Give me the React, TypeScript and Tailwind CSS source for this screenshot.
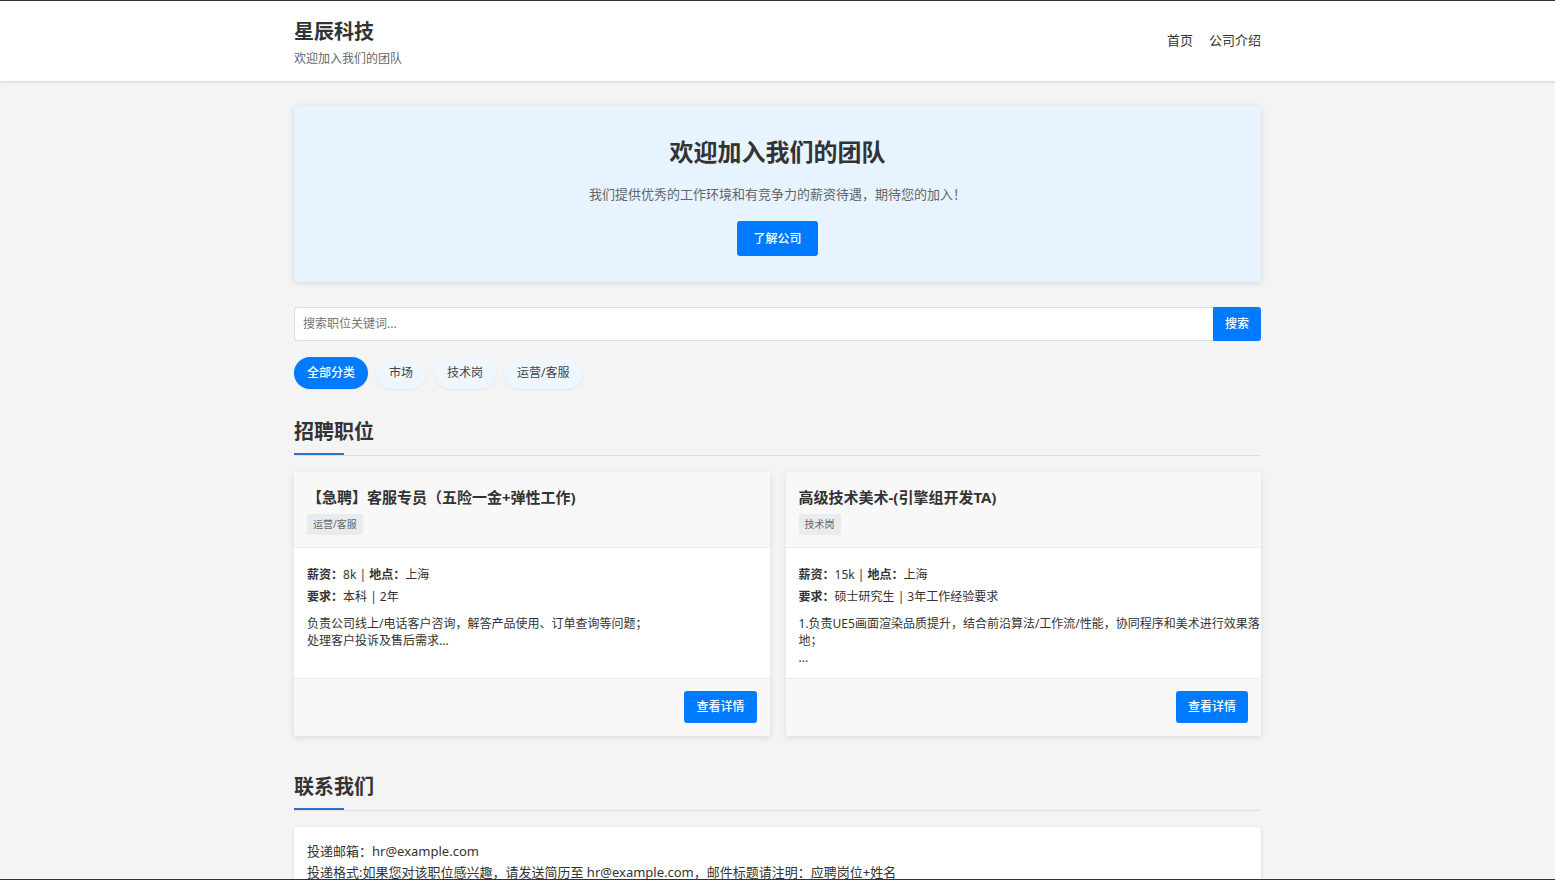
import { useState } from 'react';

interface Job {
  id: number;
  title: string;
  category: string;
  salary: string;
  location: string;
  requirement: string;
  description: string;
}

const categories = ['全部分类', '市场', '技术岗', '运营/客服'];

const jobs: Job[] = [
  {
    id: 1,
    title: '【急聘】客服专员（五险一金+弹性工作)',
    category: '运营/客服',
    salary: '8k',
    location: '上海',
    requirement: '本科 | 2年',
    description: '负责公司线上/电话客户咨询，解答产品使用、订单查询等问题；\n处理客户投诉及售后需求...',
  },
  {
    id: 2,
    title: '高级技术美术-(引擎组开发TA)',
    category: '技术岗',
    salary: '15k',
    location: '上海',
    requirement: '硕士研究生 | 3年工作经验要求',
    description: '1.负责UE5画面渲染品质提升，结合前沿算法/工作流/性能，协同程序和美术进行效果落地；\n...',
  },
];

function SectionTitle({ children }: { children: string }) {
  return (
    <h2 className="relative border-b border-[#e0e0e0] pb-[9px] text-xl leading-7 font-bold">
      {children}
      <span className="absolute bottom-0 left-0 h-0.5 w-[50px] bg-[#1f74d1]" />
    </h2>
  );
}

function JobCard({ job }: { job: Job }) {
  return (
    <article className="flex flex-col overflow-hidden rounded-[3px] bg-white shadow-[0_2px_6px_rgba(0,0,0,0.1)]">
      <div className="border-b border-[#ececec] bg-[#f8f8f9] px-[13px] pt-[13px] pb-3">
        <h3 className="text-[15px] leading-6 font-bold">{job.title}</h3>
        <span className="mt-[5px] block w-fit rounded-xs bg-[#e9ecef] px-1.5 text-[10px] leading-[21px] text-[#666]">
          {job.category}
        </span>
      </div>

      <div className="flex-1 px-[13px] pt-4 pb-3 text-xs">
        <p className="leading-[22px]">
          <strong>薪资：</strong>
          {job.salary} | <strong>地点：</strong>
          {job.location}
        </p>
        <p className="leading-[22px]">
          <strong>要求：</strong>
          {job.requirement}
        </p>
        <p className="-mr-3 mt-[7px] leading-[17px] whitespace-pre-line">{job.description}</p>
      </div>

      <div className="flex justify-end border-t border-[#ececec] bg-[#f8f8f9] px-[13px] pt-3 pb-[13px]">
        <a href="#job" className="rounded-[3px] bg-[#007bff] px-3 text-xs leading-8 font-medium text-white">
          查看详情
        </a>
      </div>
    </article>
  );
}

export default function App() {
  const [active, setActive] = useState('全部分类');

  return (
    <div
      lang="zh-CN"
      className="flex h-screen flex-col border-y border-[#333] bg-[#f4f4f4] font-['Noto_Sans','Noto_Sans_CJK_SC',sans-serif] text-[#333]"
    >
      <header className="relative z-10 bg-white shadow-[0_1px_3px_rgba(0,0,0,0.15)]">
        <div className="mx-auto flex max-w-[999px] justify-between px-4 pt-[17px] pb-3">
          <div>
            <h1 className="text-xl leading-7 font-bold">星辰科技</h1>
            <p className="mt-[3px] text-xs leading-5 text-[#666]">欢迎加入我们的团队</p>
          </div>
          <nav className="flex gap-4 pt-2.5 text-[13px] leading-6">
            <a href="#home">首页</a>
            <a href="#about">公司介绍</a>
          </nav>
        </div>
      </header>

      <main className="min-h-0 flex-1 overflow-y-auto [scrollbar-width:none]">
        <div className="mx-auto max-w-[999px] px-4 pt-[25px] pb-8">
          <section className="flex flex-col items-center rounded-[3px] bg-[#e7f3ff] px-4 pt-7 pb-[26px] text-center shadow-[0_1px_6px_rgba(0,0,0,0.12)]">
            <h2 className="text-2xl leading-9 font-bold">欢迎加入我们的团队</h2>
            <p className="mt-3 text-[13px] leading-6 text-[#666]">
              我们提供优秀的工作环境和有竞争力的薪资待遇，期待您的加入！
            </p>
            <a
              href="#about"
              className="mt-[15px] rounded-[3px] bg-[#007bff] px-4 text-xs leading-[35px] font-medium text-white"
            >
              了解公司
            </a>
          </section>

          {/* 搜索 */}
          <form className="mt-[25px] flex h-[34px]" onSubmit={(e) => e.preventDefault()}>
            <input
              type="text"
              aria-label="搜索职位关键词"
              placeholder="搜索职位关键词..."
              className="min-w-0 flex-1 rounded-l-[3px] border border-r-0 border-[#ddd] bg-white px-2 text-xs outline-none placeholder:text-[#757575]"
            />
            <button type="submit" className="rounded-r-[3px] bg-[#007bff] px-3 text-xs font-medium text-white">
              搜索
            </button>
          </form>

          {/* 分类 */}
          <div className="mt-4 flex flex-wrap gap-2">
            {categories.map((name) => (
              <button
                key={name}
                type="button"
                onClick={() => setActive(name)}
                className={`rounded-full px-[13px] text-xs leading-8 shadow-[0_1px_2px_rgba(0,0,0,0.06)] ${
                  active === name ? 'bg-[#007bff] font-medium text-white' : 'bg-[#f0f6fd] text-[#444]'
                }`}
              >
                {name}
              </button>
            ))}
          </div>

          <section className="mt-[29px]">
            <SectionTitle>招聘职位</SectionTitle>
            <div className="mt-4 grid gap-4 md:grid-cols-2">
              {jobs.map((job) => (
                <JobCard key={job.id} job={job} />
              ))}
            </div>
          </section>

          <section className="mt-[37px]">
            <SectionTitle>联系我们</SectionTitle>
            <div className="mt-4 rounded-[3px] bg-white px-[13px] py-3.5 text-[13px] leading-[21px] shadow-[0_1px_4px_rgba(0,0,0,0.12)]">
              <p>投递邮箱：hr@example.com</p>
              <p>投递格式:如果您对该职位感兴趣，请发送简历至 hr@example.com，邮件标题请注明：应聘岗位+姓名</p>
            </div>
          </section>
        </div>
      </main>
    </div>
  );
}
